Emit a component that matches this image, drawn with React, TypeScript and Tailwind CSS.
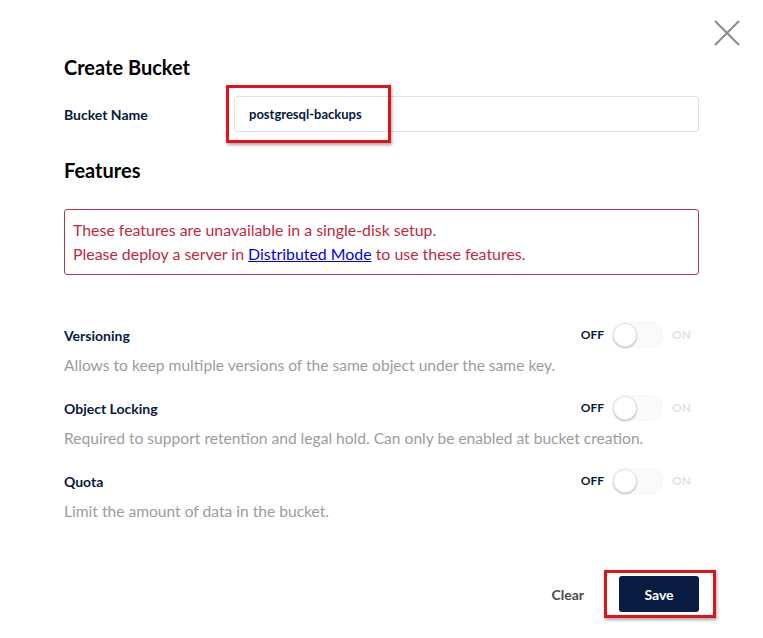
const features = [
  {
    label: "Versioning",
    description: "Allows to keep multiple versions of the same object under the same key.",
  },
  {
    label: "Object Locking",
    description:
      "Required to support retention and legal hold. Can only be enabled at bucket creation.",
  },
  {
    label: "Quota",
    description: "Limit the amount of data in the bucket.",
  },
];

const Toggle = () => {
  return (
    <div className="flex items-center">
      <span className="text-[12px] font-bold text-[#07193e] mr-[9px]">OFF</span>
      <div className="w-[50px] h-[26px] rounded-full bg-[#fafafa] shadow-[inset_0_0_2px_rgba(0,0,0,0.06)] flex items-center">
        <div className="w-[24px] h-[24px] rounded-full bg-white border border-[#e4e4e4] shadow-[0_1px_2px_rgba(0,0,0,0.25)]" />
      </div>
      <span className="text-[12px] font-bold text-[#e2e2e2] ml-[9px] mr-[8px]">ON</span>
    </div>
  );
};

export default function App() {
  return (
    <div className="relative w-[763px] h-[638px] bg-white font-['Lato',sans-serif] overflow-hidden">
      <button className="absolute top-[19px] left-[713px]">
        <svg width="28" height="28" viewBox="0 0 28 28" fill="none" stroke="#8a8a8a" strokeWidth="2">
          <line x1="2" y1="2" x2="26" y2="26" />
          <line x1="26" y1="2" x2="2" y2="26" />
        </svg>
      </button>

      <div className="px-[64px] pt-[54px] flex flex-col">
        <h1 className="text-[20px] leading-[26px] font-bold text-black">Create Bucket</h1>

        <div className="flex items-center mt-[16px]">
          <label className="w-[170px] text-[14px] font-bold text-[#07193e]">Bucket Name</label>
          <div className="relative flex-1">
            <input
              className="w-full h-[36px] border border-[#e3e3e3] rounded-[3px] px-[14px] text-[13px] font-bold text-[#07193e] outline-none"
              defaultValue="postgresql-backups"
            />
            <div className="absolute left-[-8px] top-[-11px] w-[165px] h-[58px] border-[3px] border-[#e0121a] shadow-[1px_2px_3px_rgba(0,0,0,0.35)] pointer-events-none" />
          </div>
        </div>

        <h2 className="text-[20px] leading-[26px] font-bold text-black mt-[25px]">Features</h2>

        <div className="mt-[26px] border border-[#b3394e] rounded-[3px] px-[8px] py-[8px] text-[15.9px] leading-[24px] text-[#c3283f]">
          <div>These features are unavailable in a single-disk setup.</div>
          <div>
            Please deploy a server in{" "}
            <a href="#" className="text-[#0000ee] underline">
              Distributed Mode
            </a>{" "}
            to use these features.
          </div>
        </div>

        <div className="flex flex-col gap-[20px] mt-[47px]">
          {features.map((f) => (
            <div key={f.label}>
              <div className="flex items-center justify-between h-[26px]">
                <span className="text-[14px] font-bold text-[#07193e]">{f.label}</span>
                <Toggle />
              </div>
              <p className="mt-[7px] text-[15.6px] leading-[20px] text-[#9c9c9c]">{f.description}</p>
            </div>
          ))}
        </div>

        <div className="flex items-center justify-end mt-[55px]">
          <button className="text-[14px] font-bold text-[#4a4a4a] mr-[35px]">Clear</button>
          <div className="relative">
            <button className="w-[80px] h-[36px] rounded-[3px] bg-[#081c42] text-white text-[14px] font-bold">
              Save
            </button>
            <div className="absolute left-[-15px] top-[-6px] w-[112px] h-[48px] border-[3px] border-[#e0121a] shadow-[1px_2px_3px_rgba(0,0,0,0.35)] pointer-events-none" />
          </div>
        </div>
      </div>
    </div>
  );
}
